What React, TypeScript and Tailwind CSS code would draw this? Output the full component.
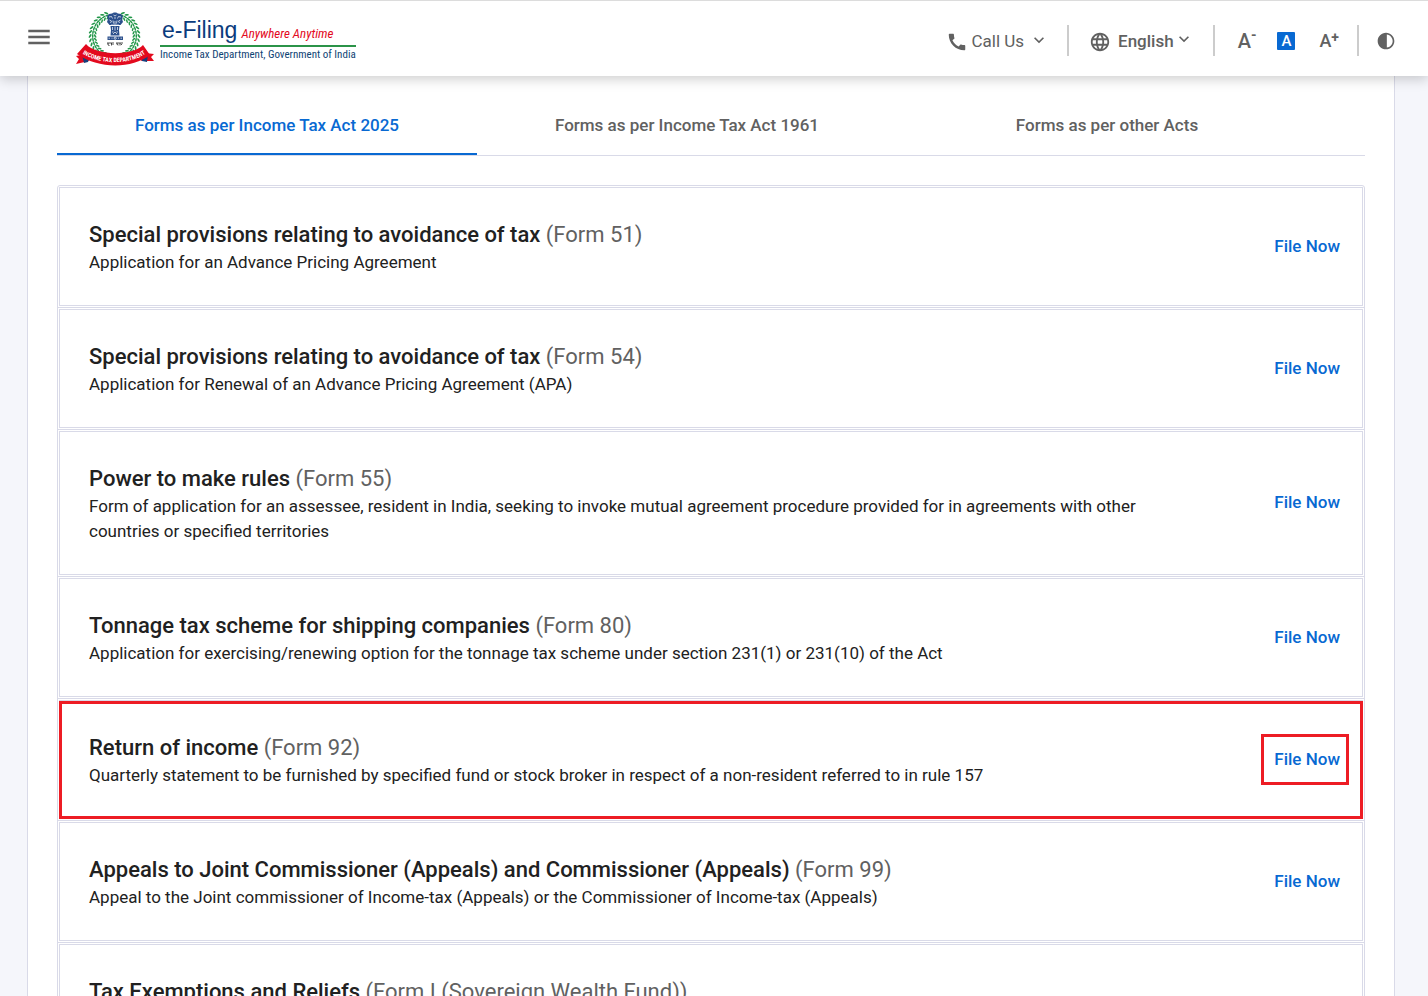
import { MdCall, MdContrast, MdKeyboardArrowDown, MdLanguage, MdMenu } from "react-icons/md";

interface TaxForm {
  title: string;
  form: string;
  description: string;
  highlighted?: boolean;
}

const TABS = [
  "Forms as per Income Tax Act 2025",
  "Forms as per Income Tax Act 1961",
  "Forms as per other Acts",
];

const FORMS: TaxForm[] = [
  {
    title: "Special provisions relating to avoidance of tax",
    form: "(Form 51)",
    description: "Application for an Advance Pricing Agreement",
  },
  {
    title: "Special provisions relating to avoidance of tax",
    form: "(Form 54)",
    description: "Application for Renewal of an Advance Pricing Agreement (APA)",
  },
  {
    title: "Power to make rules",
    form: "(Form 55)",
    description:
      "Form of application for an assessee, resident in India, seeking to invoke mutual agreement procedure provided for in agreements with other countries or specified territories",
  },
  {
    title: "Tonnage tax scheme for shipping companies",
    form: "(Form 80)",
    description:
      "Application for exercising/renewing option for the tonnage tax scheme under section 231(1) or 231(10) of the Act",
  },
  {
    title: "Return of income",
    form: "(Form 92)",
    description:
      "Quarterly statement to be furnished by specified fund or stock broker in respect of a non-resident referred to in rule 157",
    highlighted: true,
  },
  {
    title: "Appeals to Joint Commissioner (Appeals) and Commissioner (Appeals)",
    form: "(Form 99)",
    description:
      "Appeal to the Joint commissioner of Income-tax (Appeals) or the Commissioner of Income-tax (Appeals)",
  },
  {
    title: "Tax Exemptions and Reliefs",
    form: "(Form I (Sovereign Wealth Fund))",
    description: "Intimation by Sovereign Wealth Fund in respect of investment",
  },
];

// Leaf angles in degrees, clockwise from the top; the wreath stays open there.
const LEAVES = Array.from({ length: 33 }, (_, i) => 20 + i * 10);

function Emblem() {
  return (
    <svg viewBox="0 0 80 56" className="h-14 w-20 shrink-0" aria-hidden="true">
      {LEAVES.map((a) => (
        <g key={a} transform={`rotate(${a} 38.5 25)`} fill="#23974a">
          <ellipse cx="38.5" cy="0.6" rx="2.2" ry="0.9" transform={`rotate(${a < 180 ? -35 : 35} 38.5 0.6)`} />
          <ellipse cx="38.5" cy="3.2" rx="2" ry="0.8" />
          <ellipse cx="38.5" cy="5.6" rx="2" ry="0.8" transform={`rotate(${a < 180 ? 35 : -35} 38.5 5.6)`} />
        </g>
      ))}
      {/* lion capital */}
      <g fill="#2b4f8c">
        <path d="M36 2.500c1-1.500 5-1.500 6 0l3 .5 2 2.500-1 2.500 1 3-2.500 3h-11L31 11l1-3-1-2.500L33 3z" />
        <path d="M34.500 15h9l-.5 4 .5 5.500h-9l.5-5.500z" />
        <path d="M31.500 25.500h15.500v3.500H31.500z" />
      </g>
      <g stroke="#fff" strokeWidth="0.7" fill="none">
        <path d="M33 6l2.500-.5 1 2M45 6l-2.500-.5-1 2M37.500 4l1.500 1 1.500-1M39 6v2M33.500 9l2 1-1 2M44.500 9l-2 1 1 2M37 9.500l.5 3M41 9.500l-.5 3M39 10v3.500M35 14h8" />
        <path d="M36.500 16v3M39 15.500v4M41.500 16v3M36 21h1.500M40.500 21H42M37 23l2-2 2 2" />
        <circle cx="39.200" cy="27.200" r="1.100" />
        <path d="M32.500 27.200h1.500M35.500 27.200h1M42 27.200h1M44.500 27.200h1.500" />
      </g>
      <path d="M31 32h7M40 32h7M32 32v2l1.500.5M35.500 32v2.500M37.500 33.500h-1M41 32v1.500l1.500.5M44 32v2.500M46 33.500h-1" stroke="#222" strokeWidth="0.8" fill="none" />
      {/* ribbon */}
      <path d="M0 53l3-5-3-3 10-2 3 7z" fill="#e30a1e" />
      <path d="M78 50l-3-4 3-3-9-1-4 8z" fill="#e30a1e" />
      <path d="M6 44l7 3-1 4-4 1z" fill="#173f7c" />
      <path d="M72 43l-7 3 1 4 5 1z" fill="#173f7c" />
      <path d="M10 33C20 45 57 45 67 34l7 10C56 58 22 58 1 43z" fill="#e30a1e" />
      <path id="ribbon-line" d="M4 41C22 54.500 56 54.500 72 41" fill="none" />
      <text fill="#fff" className="font-['Roboto_Condensed','Liberation_Sans',sans-serif] text-[6px] font-bold">
        <textPath href="#ribbon-line" startOffset="50%" textAnchor="middle">
          INCOME TAX DEPARTMENT
        </textPath>
      </text>
    </svg>
  );
}

function Logo() {
  return (
    <a href="#home" className="ml-6 flex items-center" aria-label="e-Filing home">
      <Emblem />
      <div className="ml-1 pt-1 font-['Roboto_Condensed','Liberation_Sans',sans-serif]">
        <div className="flex items-baseline gap-1 border-b-2 border-[#2b9348] pl-0.5 leading-[23px]">
          <span className="font-['Liberation_Sans',sans-serif] text-[23px] text-[#0b3c7d]">e-Filing</span>
          <span className="text-[13px] text-[#e30a1e] italic">Anywhere Anytime</span>
        </div>
        <div className="text-[11px] leading-4 whitespace-nowrap text-[#0f4374]">
          Income Tax Department, Government of India
        </div>
      </div>
    </a>
  );
}

function Divider() {
  return <div className="h-[31px] w-0.5 bg-[#cccccc]" />;
}

function Header() {
  return (
    <header className="relative z-10 flex h-[76px] items-center border-t border-[#dcdcdc] bg-white pr-8 pl-[26px] text-[#616161] shadow-[0_3px_12px_rgba(0,0,0,0.2)]">
      <button type="button" aria-label="Menu" className="pb-1">
        <MdMenu className="size-[26px] scale-110" />
      </button>
      <Logo />
      <div className="ml-auto flex items-center pt-1">
        <button type="button" className="flex items-center pt-0.5 text-[17px]">
          <MdCall className="mr-[3px] size-[22px]" />
          Call Us
          <MdKeyboardArrowDown className="mb-1 ml-[5px] size-5" />
        </button>
        <div className="mr-5 ml-[18px]">
          <Divider />
        </div>
        <button type="button" className="flex items-center pt-0.5 text-[17px] font-medium">
          <MdLanguage className="mr-[7px] size-[22px]" />
          English
          <MdKeyboardArrowDown className="mb-1.5 size-5" />
        </button>
        <div className="mr-[23px] ml-[19px]">
          <Divider />
        </div>
        <button type="button" aria-label="Decrease text size" className="flex items-center text-[20px] leading-6 font-medium">
          A<span className="mb-3 text-[14px] leading-3 font-bold">-</span>
        </button>
        <button
          type="button"
          aria-label="Default text size"
          className="ml-[21px] size-[18px] rounded-[1px] bg-[#0869d2] text-[15px] leading-[18px] font-medium text-white"
        >
          A
        </button>
        <button type="button" aria-label="Increase text size" className="ml-6 flex items-center text-[18px] leading-6 font-medium">
          A<span className="mb-2 text-[14px] leading-3 font-bold">+</span>
        </button>
        <div className="mr-[17px] ml-[18px]">
          <Divider />
        </div>
        <button type="button" aria-label="Contrast">
          <MdContrast className="size-5" />
        </button>
      </div>
    </header>
  );
}

function FormRow({ item }: { item: TaxForm }) {
  return (
    <li className="border-b border-[#d9dae8] p-px">
      <div className="relative flex items-center border border-[#d9dae8] pr-[13px] pl-[29px]">
        {item.highlighted && (
          <div className="pointer-events-none absolute -inset-x-px top-0 -bottom-px border-[3px] border-[#ed1c24]" />
        )}
        <div className="flex-1 pt-8 pr-[120px] pb-[30px]">
          <h2 className="text-[22px] leading-[30px] font-medium text-[#212121]">
            {item.title} <span className="font-normal text-[#616161]">{item.form}</span>
          </h2>
          <p className="text-[17px] leading-[25px] text-[#212121]">{item.description}</p>
        </div>
        <button
          type="button"
          className={`h-[51px] border-[3px] pr-1.5 pl-2.5 text-[17px] font-medium whitespace-nowrap text-[#0869d2] ${
            item.highlighted ? "border-[#ed1c24]" : "border-transparent"
          }`}
        >
          File Now
        </button>
      </div>
    </li>
  );
}

export default function App() {
  return (
    <div className="h-screen overflow-hidden bg-[#f5f6fb] font-[Roboto,sans-serif]">
      <Header />
      <main className="mr-[33px] ml-[27px] border-x border-[#d9dae8] bg-white px-[29px] pt-5">
        <div role="tablist" className="flex h-[60px] border-b border-[#d9dae8]">
          {TABS.map((tab, i) => (
            <button
              key={tab}
              type="button"
              role="tab"
              aria-selected={i === 0}
              className={`w-[420px] border-b-2 pt-0.5 text-[17px] font-medium ${
                i === 0 ? "border-[#0869d2] text-[#0869d2]" : "border-transparent text-[#616161]"
              }`}
            >
              {tab}
            </button>
          ))}
        </div>
        <ul className="mt-[29px] rounded-t-[3px] border border-[#d9dae8]">
          {FORMS.map((item) => (
            <FormRow key={item.form} item={item} />
          ))}
        </ul>
      </main>
    </div>
  );
}
